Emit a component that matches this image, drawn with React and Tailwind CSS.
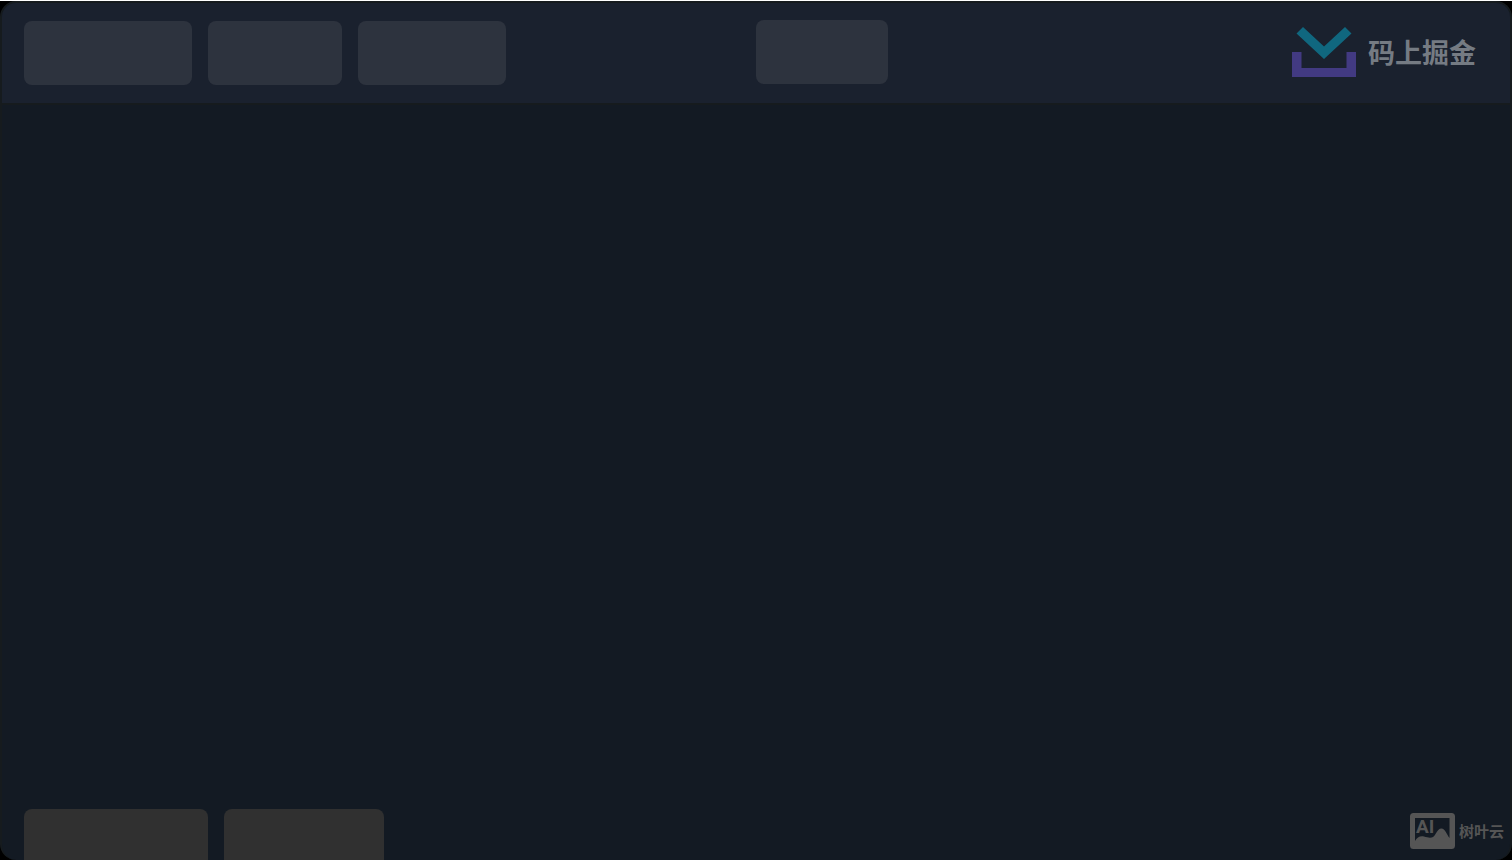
import React from 'react';

// Download-tray shaped logo with its wordmark
const BrandLogo = () => (
  <div className="flex items-center gap-3">
    <svg viewBox="0 0 64 50" className="w-16 h-[50px]" aria-hidden="true">
      <path d="M0 25H9.5V41H54.5V25H64V50H0Z" fill="#423a82"/>
      <path d="M11 0L32 19.5L53 0L59.5 6.5L32 32L4.5 6.5Z" fill="#10677f"/>
    </svg>
    <span className="text-[27px] leading-8 font-bold text-[#757b83]">码上掘金</span>
  </div>
);

const Watermark = () => (
  <div className="flex items-center gap-1 text-[#555555]">
    <svg viewBox="0 0 45 36" className="w-[45px] h-9" aria-hidden="true">
      <path
        fillRule="evenodd"
        d="M3.5 0H41.5Q45 0 45 3.5V32.5Q45 36 41.5 36H3.5Q0 36 0 32.5V3.5Q0 0 3.5 0ZM5 5V28C7 24.5 10 22.5 14 23.5C19 25 23 26 25.5 21C27.5 17.5 29 15.5 31.5 15.5C35 15.5 36.5 21 39.5 25V5Z"
        fill="currentColor"
      />
      <text x="6" y="20" fontSize="19" fontWeight="700" fontFamily="Roboto, sans-serif" fill="currentColor">AI</text>
    </svg>
    <span className="text-[15px] leading-5 font-bold">树叶云</span>
  </div>
);

const Header = () => (
  <header className="flex h-[102px] border-b-2 border-[#161b1e] bg-[#1a212e]">
    <div className="flex w-1/2 items-center gap-4 pl-[22px]">
      <div className="h-16 w-[168px] rounded-lg bg-[#2d333e]"/>
      <div className="h-16 w-[134px] rounded-lg bg-[#2d333e]"/>
      <div className="h-16 w-[148px] rounded-lg bg-[#2d333e]"/>
    </div>
    <div className="flex w-1/2 items-center justify-between pr-[34px] pb-0.5">
      <div className="h-16 w-[132px] rounded-lg bg-[#2d333e]"/>
      <BrandLogo/>
    </div>
  </header>
);

// The bar is shorter than its tabs, so they are cut off at the window's edge
const BottomBar = () => (
  <footer className="flex h-[51px] items-start justify-between overflow-hidden pl-[22px] pr-[6px]">
    <div className="flex gap-4">
      <div className="h-16 w-[184px] rounded-lg bg-[#303030]"/>
      <div className="h-16 w-[160px] rounded-lg bg-[#303030]"/>
    </div>
    <div className="pt-1">
      <Watermark/>
    </div>
  </footer>
);

const App = () => (
  <div className="flex h-screen flex-col border-t border-white bg-black font-['Noto_Sans_CJK_SC',sans-serif]">
    <div className="flex flex-1 flex-col overflow-hidden rounded-2xl border-2 border-b-0 border-[#161b1e] bg-[#131a23]">
      <Header/>
      <main className="flex-1"/>
      <BottomBar/>
    </div>
  </div>
);

export default App;
